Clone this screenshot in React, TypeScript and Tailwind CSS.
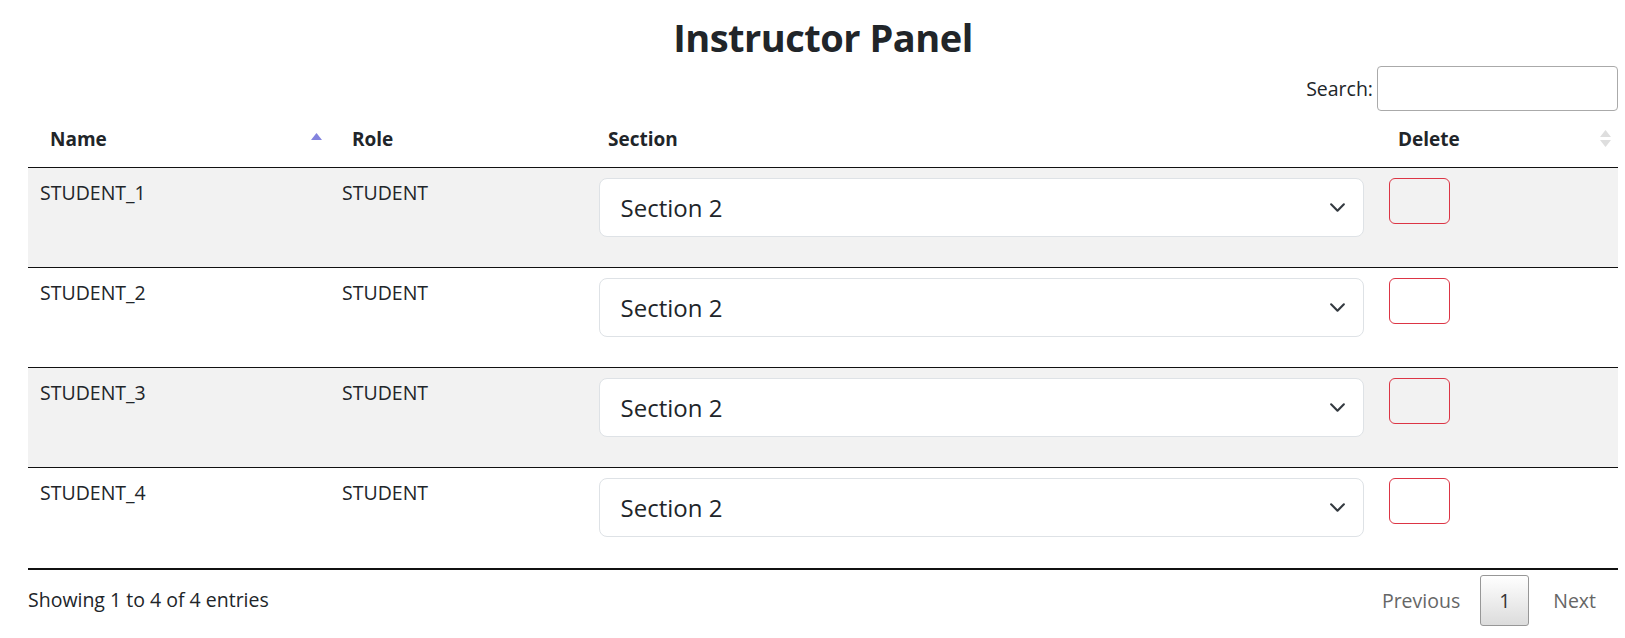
import React from 'react';

type Student = { name: string; role: string; section: string };

const students: Student[] = [
  { name: 'STUDENT_1', role: 'STUDENT', section: 'Section 2' },
  { name: 'STUDENT_2', role: 'STUDENT', section: 'Section 2' },
  { name: 'STUDENT_3', role: 'STUDENT', section: 'Section 2' },
  { name: 'STUDENT_4', role: 'STUDENT', section: 'Section 2' }
];

const cols = 'grid grid-cols-[302px_256px_790px_1fr]';

const SortAsc = () => (
  <svg width="11" height="7" viewBox="0 0 11 7" className="absolute right-[8px] top-[22px]">
    <path d="M5.5 0 L11 7 L0 7 Z" fill="#8383de" />
  </svg>
);

const SortBoth = () => (
  <svg width="11" height="17" viewBox="0 0 11 17" className="absolute right-[7px] top-[19px]">
    <path d="M5.5 0 L11 7 L0 7 Z" fill="#dedede" />
    <path d="M0 10 L11 10 L5.5 17 Z" fill="#dedede" />
  </svg>
);

const Chevron = () => (
  <svg width="17" height="17" viewBox="0 0 16 16" fill="none" className="shrink-0">
    <path d="M2 5l6 6 6-6" stroke="#343a40" strokeWidth="2" strokeLinecap="round" strokeLinejoin="round" />
  </svg>
);

const SectionSelect: React.FC<{ value: string }> = ({ value }) => (
  <div className="flex h-[59px] w-full items-center justify-between rounded-[8px] border border-[#dee2e6] bg-white pl-[21px] pr-[17px]">
    <span className="text-[24px] leading-[36px]">{value}</span>
    <Chevron />
  </div>
);

export default function App() {
  return (
    <div className="min-h-[638px] bg-white pl-[28px] pr-[7px] font-['Open_Sans',sans-serif] text-[19.5px] leading-[30px] text-[#212529]">
      <h2 className="pt-[14px] text-center text-[38px] font-bold leading-[46px] tracking-[-0.5px]">
        Instructor Panel
      </h2>

      <div className="mt-[6px] flex h-[45px] items-center justify-end">
        <label className="mr-[4px]">Search:</label>
        <input
          type="text"
          className="h-[45px] w-[241px] rounded-[4px] border border-[#aaa] bg-white px-[6px] outline-none"
        />
      </div>

      {/* header */}
      <div className={`${cols} h-[57px] border-b border-[#111] text-[19px] font-bold`}>
        <div className="relative pl-[22px] pt-[13px]">
          Name
          <SortAsc />
        </div>
        <div className="pl-[22px] pt-[13px]">Role</div>
        <div className="pl-[22px] pt-[13px]">Section</div>
        <div className="relative pl-[22px] pt-[13px]">
          Delete
          <SortBoth />
        </div>
      </div>

      {/* body */}
      {students.map((s, i) => (
        <div
          key={s.name}
          className={`${cols} ${i % 2 === 0 ? 'bg-[#f2f2f2]' : 'bg-white'} ${
            i === students.length - 1 ? 'h-[102px] border-b-2' : 'h-[100px] border-b'
          } border-[#111]`}
        >
          <div className="px-[12px] pt-[10px]">{s.name}</div>
          <div className="px-[12px] pt-[10px]">{s.role}</div>
          <div className="px-[12.5px] pt-[10px]">
            <SectionSelect value={s.section} />
          </div>
          <div className="px-[12.5px] pt-[10px]">
            <button
              type="button"
              className="h-[46px] w-[61px] rounded-[6px] border border-[#dc3545] bg-transparent"
              aria-label="Delete"
            />
          </div>
        </div>
      ))}

      {/* footer */}
      <div className="flex items-start justify-between">
        <div className="pt-[15px]">Showing 1 to 4 of 4 entries</div>
        <div className="flex items-center pt-[5px] pr-[2px]">
          <span className="px-[20px] text-[#666]">Previous</span>
          <span className="flex h-[51px] w-[49px] items-center justify-center rounded-[3px] border border-[#979797] bg-gradient-to-b from-white to-[#dcdcdc] text-[#333]">
            1
          </span>
          <span className="px-[20px] pl-[24px] text-[#666]">Next</span>
        </div>
      </div>
    </div>
  );
}
